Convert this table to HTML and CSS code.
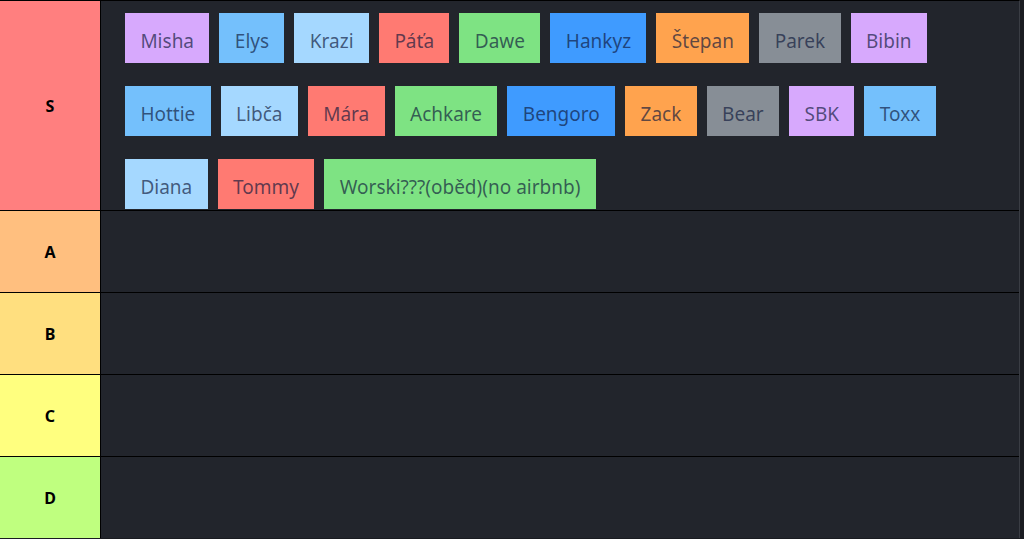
FILE: index.html
```html
<!DOCTYPE html>
<html lang="cs">
<head>
<meta charset="utf-8">
<title>Tier list</title>
<link rel="stylesheet" href="styles.css">
</head>
<body>
<div class="tiers">
  <div class="tier tier-s">
    <div class="label">S</div>
    <div class="items">
      <span class="chip purple">Misha</span>
      <span class="chip sky">Elys</span>
      <span class="chip pale">Krazi</span>
      <span class="chip red">Páťa</span>
      <span class="chip green">Dawe</span>
      <span class="chip blue">Hankyz</span>
      <span class="chip orange">Štepan</span>
      <span class="chip gray">Parek</span>
      <span class="chip purple">Bibin</span>
      <span class="chip sky">Hottie</span>
      <span class="chip pale">Libča</span>
      <span class="chip red">Mára</span>
      <span class="chip green">Achkare</span>
      <span class="chip blue">Bengoro</span>
      <span class="chip orange">Zack</span>
      <span class="chip gray">Bear</span>
      <span class="chip purple">SBK</span>
      <span class="chip sky">Toxx</span>
      <span class="chip pale">Diana</span>
      <span class="chip red">Tommy</span>
      <span class="chip green">Worski???(oběd)(no airbnb)</span>
    </div>
  </div>
  <div class="tier tier-a">
    <div class="label">A</div>
    <div class="items"></div>
  </div>
  <div class="tier tier-b">
    <div class="label">B</div>
    <div class="items"></div>
  </div>
  <div class="tier tier-c">
    <div class="label">C</div>
    <div class="items"></div>
  </div>
  <div class="tier tier-d">
    <div class="label">D</div>
    <div class="items"></div>
  </div>
</div>
</body>
</html>
```

FILE: styles.css
```css
html, body {
  margin: 0;
  padding: 0;
  background: #1a1c21;
}

body {
  width: 1024px;
  height: 539px;
  overflow: hidden;
  font-family: "Noto Sans", "Open Sans", sans-serif;
}

.tiers {
  width: 1019px;
  border-top: 1px solid #000;
  border-right: 1px solid #3a3d44;
  background: #000;
  display: flex;
  flex-direction: column;
}

.tier {
  display: flex;
  border-bottom: 1px solid #000;
  min-height: 81px;
}

.tier-s {
  min-height: 209px;
}

.tier-d {
  border-bottom: none;
}

.label {
  width: 100px;
  flex: none;
  display: flex;
  align-items: center;
  justify-content: center;
  font-family: "Noto Sans", "Open Sans", sans-serif;
  font-weight: 700;
  font-size: 16px;
  color: #000;
  border-right: 1px solid #000;
}

.tier-s .label { background: #ff7f7f; }
.tier-a .label { background: #ffbf7f; }
.tier-b .label { background: #ffdf7f; }
.tier-c .label { background: #ffff7f; }
.tier-d .label { background: #bfff7f; }

.items {
  flex: 1;
  background: #22252c;
  display: flex;
  flex-wrap: wrap;
  align-content: flex-start;
  column-gap: 10px;
  row-gap: 23px;
  padding: 12px 0 0 24px;
}

.chip {
  box-sizing: border-box;
  height: 50px;
  display: flex;
  align-items: center;
  padding: 6px 15.4px 0;
  font-size: 19px;
  color: rgba(15, 25, 60, 0.68);
  white-space: nowrap;
}

.purple { background: #d7a9fd; }
.sky { background: #74c0fc; }
.pale { background: #a5d8ff; }
.red { background: #ff7a72; }
.green { background: #7ee383; }
.blue { background: #3f9bff; }
.orange { background: #ffa34e; }
.gray { background: #878e96; }
```
